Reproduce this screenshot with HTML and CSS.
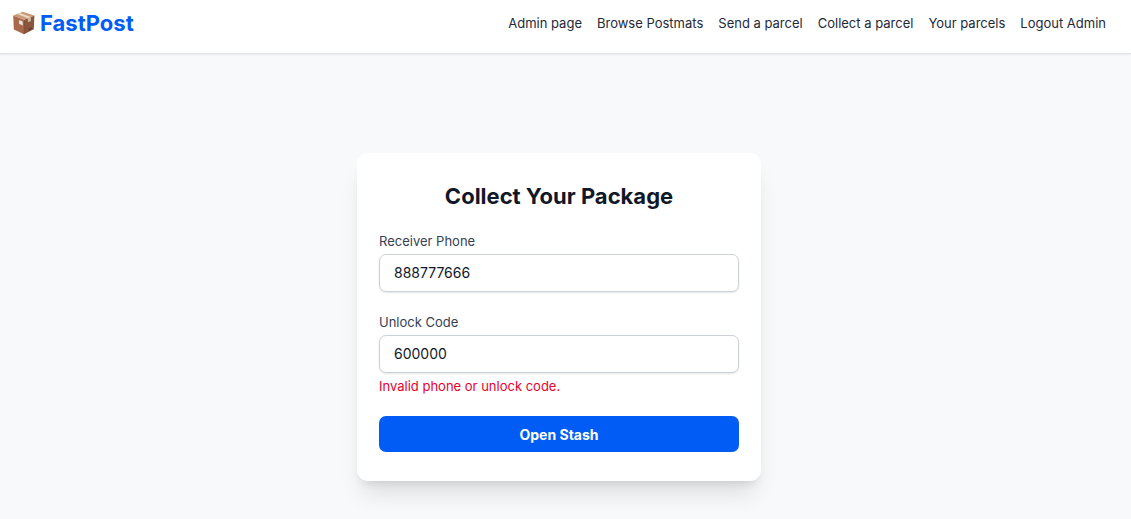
FILE: index.html
```html
<!DOCTYPE html>
<html lang="en">
<head>
  <meta charset="utf-8">
  <meta name="viewport" content="width=device-width, initial-scale=1">
  <title>FastPost</title>
  <link rel="stylesheet" href="styles.css">
</head>
<body>
  <header class="header">
    <a class="brand" href="#">
      <svg class="brand-icon" viewBox="0 0 24 24" aria-hidden="true">
        <path d="M1.2 4.6 12 8.8V23.2L1.8 18.4Z" fill="#a96a4c"/>
        <path d="M12 8.8 22.4 4.6 21.8 18.2 12 23.2Z" fill="#8a543d"/>
        <path d="M1.2 4.6 10.8 .8 22.4 4.6 12 8.8Z" fill="#c89a78"/>
        <path d="M4.9 3.1 7.6 2.1 18.9 6 15.9 7.2Z" fill="#ead9c5"/>
        <path d="M15.9 7.2 18.9 6V10.4L17.9 10.1 17 11.2 15.9 11Z" fill="#d2b79c"/>
        <path d="M7 9 10.8 10.6V14.6L7 12.8Z" fill="#e3e1df"/>
        <path d="M12 8.8V23.2" stroke="#75452f" stroke-width=".4"/>
        <path d="M16.6 17.8 19.8 16.2V17.8L16.6 19.5Z" fill="#5b382b"/>
      </svg>
      <span>FastPost</span>
    </a>
    <nav class="nav">
      <a href="#">Admin page</a>
      <a href="#">Browse Postmats</a>
      <a href="#">Send a parcel</a>
      <a href="#">Collect a parcel</a>
      <a href="#">Your parcels</a>
      <a href="#">Logout Admin</a>
    </nav>
  </header>
  <main class="main">
    <form class="card">
      <h1 class="title">Collect Your Package</h1>
      <div class="field">
        <label for="phone">Receiver Phone</label>
        <input id="phone" type="text" value="888777666">
      </div>
      <div class="field">
        <label for="code">Unlock Code</label>
        <input id="code" type="text" value="600000" aria-describedby="error">
        <p class="error" id="error">Invalid phone or unlock code.</p>
      </div>
      <button class="submit" type="button">Open Stash</button>
    </form>
  </main>
</body>
</html>
```
FILE: styles.css
```css
* {
  box-sizing: border-box;
}

body {
  margin: 0;
  background: #f8f9fb;
  color: #101828;
  font: 13px/18px Inter, "Liberation Sans", sans-serif;
}

.header {
  display: flex;
  align-items: center;
  justify-content: space-between;
  padding: 8px 25px 15px 12px;
  background: #fff;
  border-bottom: 1px solid #dfe2e6;
  box-shadow: 0 1px 2px rgb(0 0 0 / 6%);
}

.brand {
  display: flex;
  align-items: center;
  gap: 4px;
  color: #005cf5;
  font-size: 22px;
  font-weight: 700;
  line-height: 30px;
  text-decoration: none;
}

.brand-icon {
  width: 24px;
  height: 24px;
}

.nav {
  display: flex;
  gap: 15px;
}

.nav a {
  color: #1e2939;
  text-decoration: none;
}

.main {
  display: flex;
  justify-content: center;
  padding: 99px 13px 38px 0;
}

.card {
  display: flex;
  flex-direction: column;
  gap: 21px;
  width: 100%;
  max-width: 404px;
  padding: 29px 22px;
  background: #fff;
  border-radius: 11px;
  box-shadow: 0 18px 22px -5px rgb(0 0 0 / 10%), 0 7px 9px -5px rgb(0 0 0 / 10%);
}

.title {
  margin: 0;
  font-size: 22px;
  font-weight: 700;
  line-height: 29px;
  text-align: center;
}

.field {
  display: flex;
  flex-direction: column;
  gap: 4px;
}

.field label {
  color: #364153;
}

.field input {
  width: 100%;
  height: 38px;
  padding: 0 14px 2px;
  background: #fff;
  border: 1px solid #ccd1d9;
  border-radius: 7px;
  box-shadow: 0 1px 2px rgb(0 0 0 / 10%);
  color: #101828;
  font: 14px/20px Inter, "Liberation Sans", sans-serif;
}

.error {
  margin: 0;
  color: #e7002f;
}

.submit {
  height: 36px;
  padding: 2px 14px 0;
  background: #005cf5;
  border: 0;
  border-radius: 7px;
  color: #fff;
  font: 700 14px/20px Inter, "Liberation Sans", sans-serif;
}
```
